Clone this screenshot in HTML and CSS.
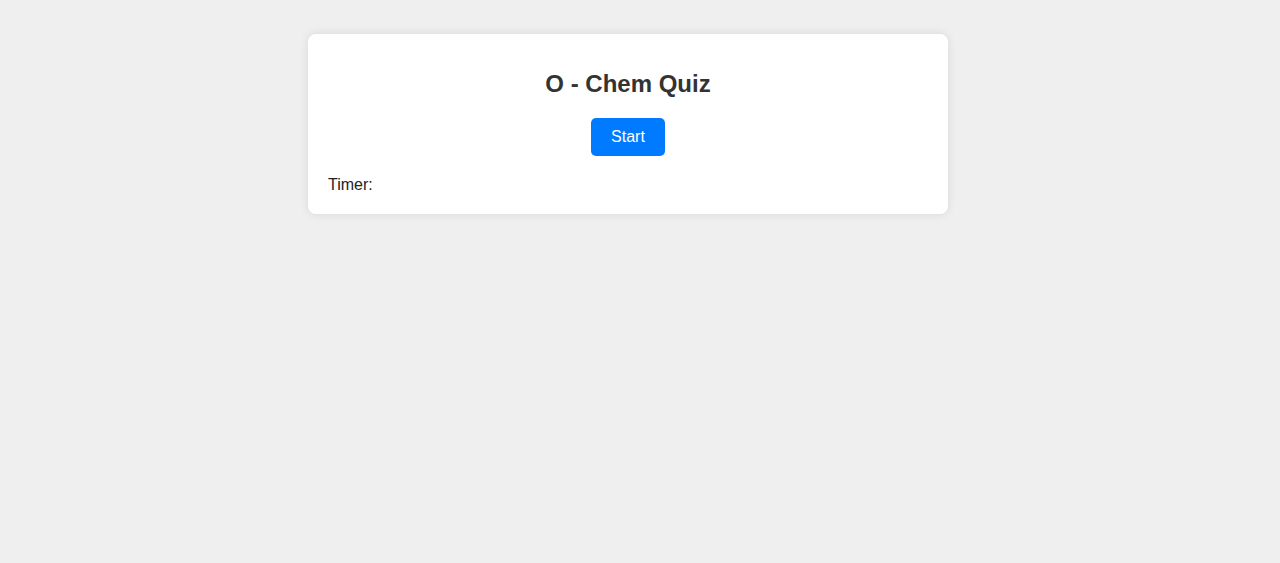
FILE: index.html
```html
<!DOCTYPE html>
<html lang="en">
<head>
<meta charset="utf-8">
<title>O - Chem Quiz</title>
<link rel="stylesheet" href="styles.css">
</head>
<body>
  <div class="card">
    <h1 class="title">O - Chem Quiz</h1>
    <div class="actions">
      <button class="btn-start" type="button">Start</button>
    </div>
    <div class="timer">Timer: <span class="timer-value"></span></div>
  </div>
</body>
</html>
```
FILE: styles.css
```css
html, body {
  margin: 0;
  background: #efefef;
}

body {
  font-family: "Liberation Sans", Arial, sans-serif;
  padding: 34px 24px 34px 0;
}

.card {
  width: 600px;
  margin: 0 auto;
  background: #ffffff;
  padding: 20px;
  border-radius: 8px;
  box-shadow: 0 0 10px rgba(0, 0, 0, 0.1);
}

.title {
  margin: 16px 0 20px;
  font-size: 24px;
  line-height: 28px;
  font-weight: bold;
  color: #333333;
  text-align: center;
}

.actions {
  display: flex;
  justify-content: center;
}

.btn-start {
  font-family: inherit;
  font-size: 16px;
  line-height: 18px;
  padding: 10px 20px;
  border: none;
  border-radius: 5px;
  background: #007bff;
  color: #ffffff;
  cursor: pointer;
}

.timer {
  margin-top: 20px;
  font-size: 16px;
  line-height: 18px;
  color: #222222;
}
```
